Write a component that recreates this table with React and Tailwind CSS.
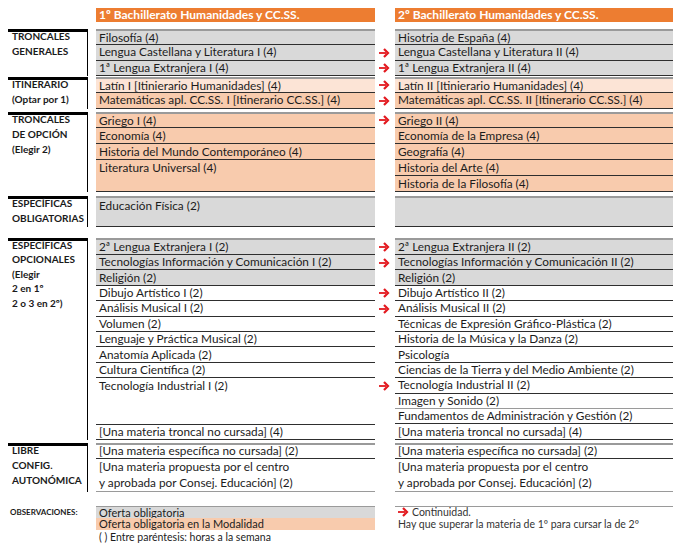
import React from 'react';

const GRAY = 'bg-[#D9D9D9]';
const PEACH = 'bg-[#F8CBAD]';
const LIGHT = 'bg-[#FCE4D6]';

function Arrow({ className = '' }) {
  return (
    <svg width="11" height="10" viewBox="0 0 11 10" className={className}>
      <path d="M0 4.1h7v1.8H0z" fill="#E3191F" />
      <path d="M5 1 L9 5 L5 9" stroke="#E3191F" strokeWidth="2.2" fill="none" />
    </svg>
  );
}

function Cell({ c = {}, w }) {
  const { t = '', bg = '', top = false, topDark = false, bottom = 'dark', lines = null, align = 'center' } = c;
  const b =
    bottom === 'dark'
      ? 'border-b border-b-[#2e2e2e]'
      : bottom === 'light'
      ? 'border-b border-b-[#9a9a9a]'
      : '';
  const tb = top ? 'border-t-2 border-t-[#9a9a9a]' : topDark ? 'border-t border-t-[#2e2e2e]' : '';
  const al = align === 'top' ? 'items-start pt-[2px]' : 'items-center';
  return (
    <div className={`${w} ${bg} ${b} ${tb} flex ${al} pl-[3px] text-[11.8px] leading-none whitespace-nowrap text-[#1c1c1c]`}>
      {lines ? (
        <div className="flex flex-col leading-[16px]">
          {lines.map((l) => (
            <span key={l}>{l}</span>
          ))}
        </div>
      ) : (
        t
      )}
    </div>
  );
}

function Row({ h, c1, c2, arrow }) {
  return (
    <div className={`flex ${h}`}>
      <Cell c={c1} w="w-[279px]" />
      <div className="w-[20px] flex items-center pl-[4px]">{arrow ? <Arrow /> : null}</div>
      <Cell c={c2} w="w-[278px]" />
    </div>
  );
}

function Section({ mt, label, labelShift = '-mt-[3px] leading-[15px]', rows }) {
  return (
    <div className={`flex ${mt}`}>
      <div className="w-[80px] border-t-[3px] border-t-black border-r border-r-black pl-[4px]">
        <div className={`${labelShift} flex flex-col text-[10px] font-bold text-[#1a1a1a] whitespace-nowrap`}>
          {label.map((l) => (
            <span key={l}>{l}</span>
          ))}
        </div>
      </div>
      <div className="w-[8px]" />
      <div className="flex flex-col">
        {rows.map((r, i) => (
          <Row key={i} {...r} />
        ))}
      </div>
    </div>
  );
}

const s1 = [
  { h: 'h-[16px]', c1: { t: 'Filosofía (4)', bg: GRAY, top: true }, c2: { t: 'Hisotria de España (4)', bg: GRAY, top: true } },
  { h: 'h-[15.5px]', arrow: true, c1: { t: 'Lengua Castellana y Literatura I (4)', bg: GRAY }, c2: { t: 'Lengua Castellana y Literatura II (4)', bg: GRAY } },
  { h: 'h-[15.5px]', arrow: true, c1: { t: '1ª Lengua Extranjera I (4)', bg: GRAY }, c2: { t: '1ª Lengua Extranjera II (4)', bg: GRAY } },
];

const s2 = [
  { h: 'h-[16px]', arrow: true, c1: { t: 'Latín I [Itinierario Humanidades] (4)', bg: LIGHT, top: true }, c2: { t: 'Latín II [Itinierario Humanidades] (4)', bg: LIGHT, top: true } },
  { h: 'h-[15.5px]', arrow: true, c1: { t: 'Matemáticas apl. CC.SS. I [Itinerario CC.SS.] (4)', bg: PEACH }, c2: { t: 'Matemáticas apl. CC.SS. II [Itinerario CC.SS.] (4)', bg: PEACH } },
];

const s3 = [
  { h: 'h-[16px]', arrow: true, c1: { t: 'Griego I (4)', bg: PEACH, top: true }, c2: { t: 'Griego II (4)', bg: PEACH, top: true } },
  { h: 'h-[16px]', c1: { t: 'Economía (4)', bg: PEACH }, c2: { t: 'Economía de la Empresa (4)', bg: PEACH } },
  { h: 'h-[16px]', c1: { t: 'Historia del Mundo Contemporáneo (4)', bg: PEACH }, c2: { t: 'Geografía (4)', bg: PEACH } },
  { h: 'h-[16px]', c1: { t: 'Literatura Universal (4)', bg: PEACH, bottom: 'none' }, c2: { t: 'Historia del Arte (4)', bg: PEACH } },
  { h: 'h-[16px]', c1: { t: '', bg: PEACH }, c2: { t: 'Historia de la Filosofía (4)', bg: PEACH } },
];

const s4 = [
  { h: 'h-[31px]', c1: { t: 'Educación Física (2)', bg: GRAY, top: true, align: 'top' }, c2: { t: '', bg: GRAY, top: true } },
];

const R = 'h-[15.4px]';
const s5 = [
  { h: 'h-[17px]', arrow: true, c1: { t: '2ª Lengua Extranjera I (2)', bg: GRAY, top: true }, c2: { t: '2ª Lengua Extranjera II (2)', bg: GRAY, top: true } },
  { h: R, arrow: true, c1: { t: 'Tecnologías Información y Comunicación I (2)', bg: GRAY }, c2: { t: 'Tecnologías Información y Comunicación II (2)', bg: GRAY } },
  { h: R, c1: { t: 'Religión (2)', bg: GRAY }, c2: { t: 'Religión (2)', bg: GRAY } },
  { h: R, arrow: true, c1: { t: 'Dibujo Artístico I (2)' }, c2: { t: 'Dibujo Artístico II (2)' } },
  { h: R, arrow: true, c1: { t: 'Análisis Musical I (2)' }, c2: { t: 'Análisis Musical II (2)' } },
  { h: R, c1: { t: 'Volumen (2)' }, c2: { t: 'Técnicas de Expresión Gráfico-Plástica (2)' } },
  { h: R, c1: { t: 'Lenguaje y Práctica Musical (2)' }, c2: { t: 'Historia de la Música y la Danza (2)' } },
  { h: R, c1: { t: 'Anatomía Aplicada (2)' }, c2: { t: 'Psicología' } },
  { h: R, c1: { t: 'Cultura Científica (2)' }, c2: { t: 'Ciencias de la Tierra y del Medio Ambiente (2)' } },
  { h: R, arrow: true, c1: { t: 'Tecnología Industrial I (2)', bottom: 'none' }, c2: { t: 'Tecnología Industrial II (2)' } },
  { h: R, c1: { bottom: 'none' }, c2: { t: 'Imagen y Sonido (2)', bottom: 'light' } },
  { h: R, c1: { bottom: 'none' }, c2: { t: 'Fundamentos de Administración y Gestión (2)' } },
  { h: 'h-[16px]', c1: { t: '[Una materia troncal no cursada] (4)', topDark: true }, c2: { t: '[Una materia troncal no cursada] (4)' } },
];

const s6 = [
  { h: 'h-[16px]', c1: { t: '[Una materia específica no cursada] (2)', top: true }, c2: { t: '[Una materia específica no cursada] (2)', top: true } },
  {
    h: 'h-[33px]',
    c1: { lines: ['[Una materia propuesta por el centro', 'y aprobada por Consej. Educación] (2)'], bottom: 'light' },
    c2: { lines: ['[Una materia propuesta por el centro', 'y aprobada por Consej. Educación] (2)'], bottom: 'light' },
  },
];

export default function App() {
  return (
    <div className="w-[682px] h-[558px] bg-white font-['Lato','Liberation_Sans',sans-serif] overflow-hidden">
      <div className="pl-[8px] pt-[8px]">
        <div className="flex h-[14px]">
          <div className="w-[88px]" />
          <div className="w-[279px] bg-[#ED7D31] text-white font-bold text-[12px] flex items-center pl-[3px] whitespace-nowrap">
            1º Bachillerato Humanidades y CC.SS.
          </div>
          <div className="w-[20px]" />
          <div className="w-[278px] bg-[#ED7D31] text-white font-bold text-[12px] flex items-center pl-[3px] whitespace-nowrap">
            2º Bachillerato Humanidades y CC.SS.
          </div>
        </div>

        <Section mt="mt-[7px]" label={['TRONCALES', 'GENERALES']} rows={s1} />
        <Section mt="mt-[1px]" label={['ITINERARIO', '(Optar por 1)']} rows={s2} />
        <Section mt="mt-[3.5px]" label={['TRONCALES', 'DE OPCIÓN', '(Elegir 2)']} rows={s3} />
        <Section mt="mt-[4px]" label={['ESPECÍFICAS', 'OBLIGATORIAS']} rows={s4} />
        <Section
          mt="mt-[11px]"
          labelShift="-mt-[3px] leading-[14.4px]"
          label={['ESPECÍFICAS', 'OPCIONALES', '(Elegir', '2 en 1º', '2 o 3 en 2º)']}
          rows={s5}
        />
        <Section mt="mt-[2.6px]" label={['LIBRE', 'CONFIG.', 'AUTONÓMICA']} rows={s6} />

        <div className="flex mt-[14px]">
          <div className="w-[88px] pl-[2px] pt-[2px] text-[8px] font-bold text-[#1a1a1a] leading-none">OBSERVACIONES:</div>
          <div className="w-[279px] flex flex-col border-t border-t-[#9a9a9a]">
            <div className={`h-[11px] ${GRAY} flex items-center pl-[3px] text-[11px] leading-none text-[#1c1c1c]`}>Oferta obligatoria</div>
            <div className={`h-[12px] ${PEACH} flex items-center pl-[3px] text-[11px] leading-none text-[#1c1c1c]`}>Oferta obligatoria en la Modalidad</div>
            <div className="h-[14px] flex items-center pl-[3px] text-[10.5px] leading-none text-[#1c1c1c]">( ) Entre paréntesis: horas a la semana</div>
          </div>
          <div className="w-[20px]" />
          <div className="w-[278px] flex flex-col border-t border-t-[#9a9a9a] text-[10.5px] text-[#333] leading-none">
            <div className="h-[11px] flex items-center pl-[3px] gap-[3px]">
              <Arrow />
              <span>Continuidad.</span>
            </div>
            <div className="h-[12px] flex items-center pl-[3px]">Hay que superar la materia de 1º para cursar la de 2º</div>
          </div>
        </div>
      </div>
    </div>
  );
}
